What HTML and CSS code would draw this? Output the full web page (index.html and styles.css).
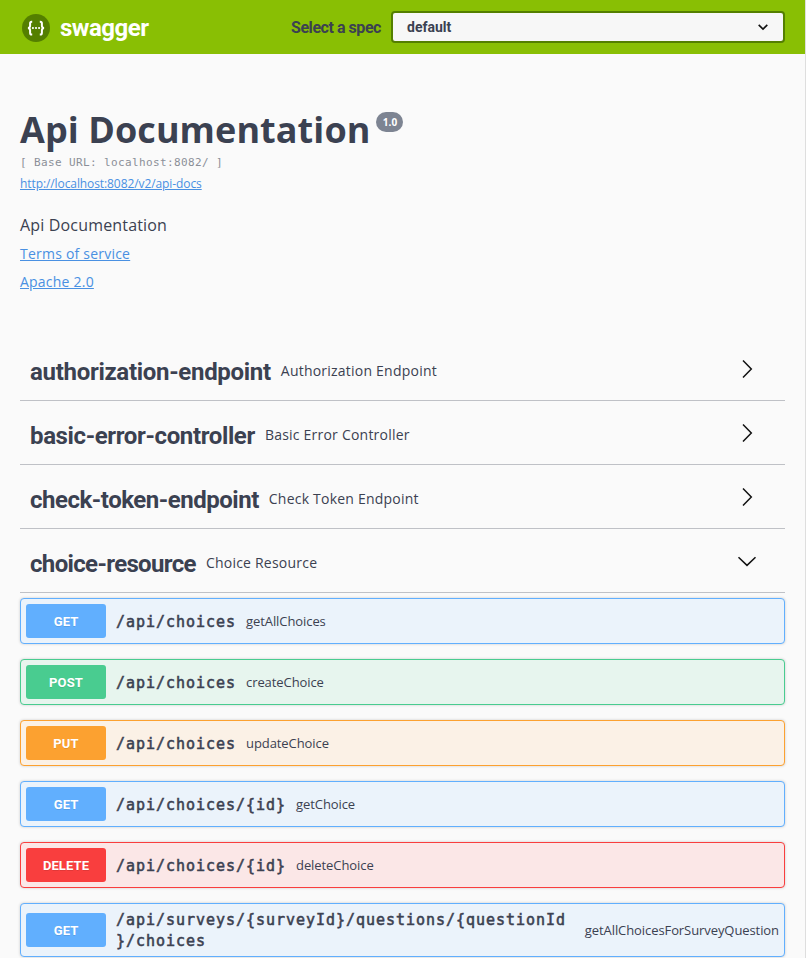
FILE: index.html
```html
<!DOCTYPE html>
<html lang="en">
<head>
<meta charset="utf-8">
<title>Swagger UI</title>
<link rel="stylesheet" href="styles.css">
</head>
<body>
<div class="page">
  <header class="topbar">
    <div class="brand">
      <svg class="logo" viewBox="0 0 28 28" width="28" height="28" aria-hidden="true">
        <circle cx="14" cy="14" r="14" fill="#547f00"/>
        <path d="M10.2 7.7H9.7Q8.1 7.7 8.1 9.5V11.8Q8.1 13.9 6 14.1Q8.1 14.3 8.1 16.4V18.7Q8.1 20.6 9.7 20.6H10.2M17.8 7.7H18.3Q19.9 7.7 19.9 9.5V11.8Q19.9 13.9 22 14.1Q19.9 14.3 19.9 16.4V18.7Q19.9 20.6 18.3 20.6H17.8" fill="none" stroke="#fff" stroke-width="2"/>
        <g fill="#fff"><circle cx="10.9" cy="14" r="1.1"/><circle cx="14" cy="14" r="1.1"/><circle cx="17.1" cy="14" r="1.1"/></g>
      </svg>
      <span class="brand-name">swagger</span>
    </div>
    <div class="spec">
      <span class="spec-label">Select a spec</span>
      <div class="select"><span class="select-value">default</span>
        <svg viewBox="0 0 20 20" width="20" height="20" aria-hidden="true"><path d="M5.7 7.9L10 12.1L14.3 7.9" fill="none" stroke="#111" stroke-width="1.6"/></svg>
      </div>
    </div>
  </header>
  <main>
    <section class="info">
      <div class="title-row"><h1>Api Documentation</h1><span class="version">1.0</span></div>
      <div class="base-url">[ Base URL: localhost:8082/ ]</div>
      <a class="docs-link" href="#">http://localhost:8082/v2/api-docs</a>
      <p class="description">Api Documentation</p>
      <a class="info-link" href="#">Terms of service</a>
      <a class="info-link" href="#">Apache 2.0</a>
    </section>
    <section class="tag"><h2 class="t-auth">authorization-endpoint</h2><small>Authorization Endpoint</small><svg viewBox="0 0 20 20" width="20" height="20"><path d="M6 1.5L14.3 10L6 18.5"/></svg></section>
    <section class="tag"><h2 class="t-basic">basic-error-controller</h2><small>Basic Error Controller</small><svg viewBox="0 0 20 20" width="20" height="20"><path d="M6 1.5L14.3 10L6 18.5"/></svg></section>
    <section class="tag"><h2 class="t-check">check-token-endpoint</h2><small>Check Token Endpoint</small><svg viewBox="0 0 20 20" width="20" height="20"><path d="M6 1.5L14.3 10L6 18.5"/></svg></section>
    <section class="tag"><h2 class="t-choice">choice-resource</h2><small>Choice Resource</small><svg viewBox="0 0 20 20" width="20" height="20"><path d="M1.5 6.2L10 14.4L18.5 6.2"/></svg></section>
    <div class="operations">
      <div class="op get"><span class="method">GET</span><span class="path">/api/choices</span><span class="summary">getAllChoices</span></div>
      <div class="op post"><span class="method">POST</span><span class="path">/api/choices</span><span class="summary">createChoice</span></div>
      <div class="op put"><span class="method">PUT</span><span class="path">/api/choices</span><span class="summary">updateChoice</span></div>
      <div class="op get"><span class="method">GET</span><span class="path">/api/choices/{id}</span><span class="summary">getChoice</span></div>
      <div class="op delete"><span class="method">DELETE</span><span class="path">/api/choices/{id}</span><span class="summary">deleteChoice</span></div>
      <div class="op get wrapped"><span class="method">GET</span><span class="path">/api/surveys/{surveyId}/questions/{questionId<br>}/choices</span><span class="summary">getAllChoicesForSurveyQuestion</span></div>
    </div>
  </main>
</div>
</body>
</html>
```
FILE: styles.css
```css
* { box-sizing: border-box; }
html { overflow: hidden; }
body { margin: 0; background: #fafafa; color: #3b4151; font-family: "Open Sans", sans-serif; }
.page { height: 958px; border-right: 1px solid #dedede; overflow: hidden; }
.topbar { height: 54px; padding: 0 20px 0 22px; background: #89bf04; display: flex; align-items: center; justify-content: space-between; }
.brand { display: flex; align-items: center; gap: 10px; padding-top: 2px; }
.brand-name { color: #fff; font: 700 24px/30px Roboto, sans-serif; letter-spacing: -.5px; }
.logo { display: block; }
.spec { display: flex; align-items: center; gap: 10px; }
.spec-label { padding-top: 1px; font: 700 16px/24px Roboto, sans-serif; letter-spacing: -.45px; white-space: nowrap; }
.select { width: 394px; height: 32px; border: 2px solid #547f00; border-radius: 4px; background: #f7f7f7; display: flex; align-items: center; justify-content: space-between; padding: 0 10px 0 14px; }
.select-value { font: 700 14px/20px Roboto, sans-serif; }
.select svg { display: block; }
main { padding: 0 20px; }
.info { height: 283px; padding-top: 51px; }
.title-row { display: flex; align-items: flex-start; gap: 6px; height: 49px; }
h1 { margin: 0; font-size: 36px; line-height: 49px; font-weight: 700; letter-spacing: .07px; white-space: nowrap; }
.version { margin-top: 7px; width: 27px; height: 20px; border-radius: 10px; background: #7d8492; color: #fff; font-size: 10px; line-height: 20px; font-weight: 700; text-align: center; }
.base-url { height: 16px; font: 11px/18px "DejaVu Sans Mono", monospace; letter-spacing: .38px; color: #8b8f98; white-space: pre; }
.docs-link { display: block; width: max-content; margin-top: 5px; font-size: 12px; line-height: 17px; letter-spacing: -.09px; color: #4990e2; }
.description { margin: 22px 0 0; font-size: 16px; line-height: 22px; letter-spacing: .17px; }
.info-link { display: block; width: max-content; margin-top: 8px; font-size: 14px; line-height: 19px; letter-spacing: .22px; color: #4990e2; }
.info-link + .info-link { margin-top: 9px; }
.tag { height: 64px; padding: 4px 28px 0 10px; border-bottom: 1px solid #bfc1c6; display: flex; align-items: center; }
.tag h2 { margin: 2px 10px 0 0; font: 700 24px/30px Roboto, sans-serif; white-space: nowrap; }
.tag .t-auth { letter-spacing: -.3px; }
.tag .t-basic { letter-spacing: -.37px; }
.tag .t-check { letter-spacing: -.48px; }
.tag .t-choice { letter-spacing: -.65px; }
.tag small { flex: 1; font-size: 14px; line-height: 20px; letter-spacing: .22px; }
.tag svg { display: block; margin-bottom: 4px; fill: none; stroke: #111; stroke-width: 1.5; }
.operations { padding-top: 5px; }
.op { height: 46px; margin-bottom: 15px; padding: 5px; border: 1px solid; border-radius: 4px; box-shadow: 0 0 3px rgba(0,0,0,.19); display: flex; align-items: center; }
.wrapped { height: 54px; }
.method { width: 80px; height: 34px; border-radius: 3px; color: #fff; font: 700 13px/35px Roboto, sans-serif; letter-spacing: .1px; text-align: center; text-shadow: 0 1px 0 rgba(0,0,0,.1); }
.path { padding: 2px 10px 0; font: 400 15px/21px "DejaVu Sans Mono", monospace; letter-spacing: .97px; -webkit-text-stroke: .55px #3b4151; white-space: nowrap; }
.summary { font-size: 13px; line-height: 18px; letter-spacing: -.08px; white-space: nowrap; }
.wrapped .summary { margin-left: auto; }
.get { border-color: #61affe; background: #ebf3fb; }
.get .method { background: #61affe; }
.post { border-color: #49cc90; background: #e7f5ee; }
.post .method { background: #49cc90; }
.put { border-color: #fca130; background: #fbf1e6; }
.put .method { background: #fca130; }
.delete { border-color: #f93e3e; background: #fbe7e7; }
.delete .method { background: #f93e3e; }
```
